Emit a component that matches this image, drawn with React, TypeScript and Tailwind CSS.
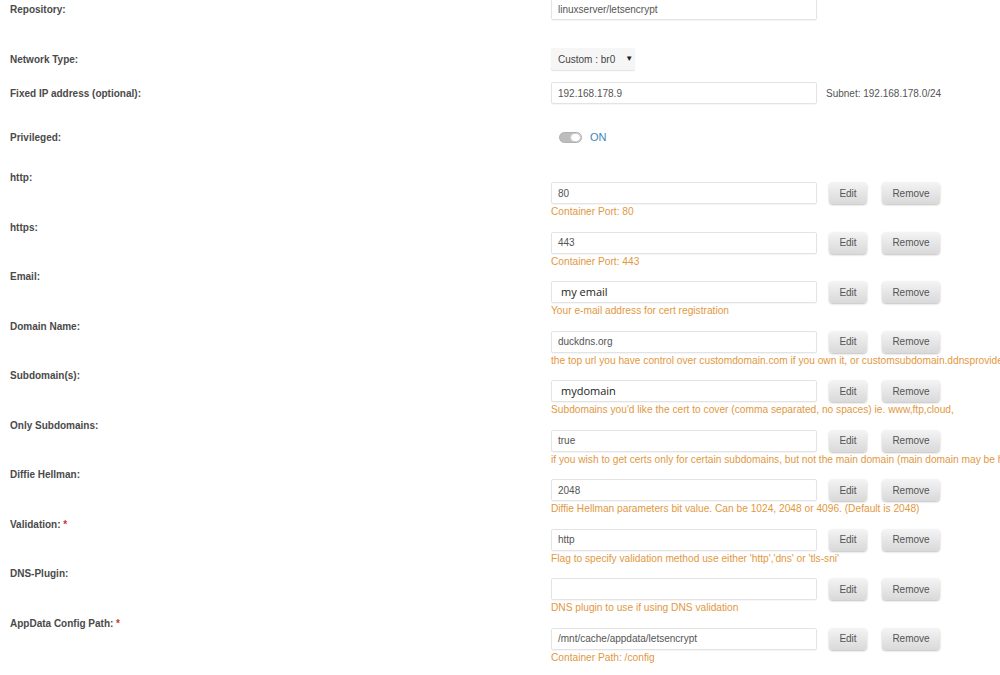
import React from 'react'

type Field = {
  label: string
  value: string
  help: string
  required?: boolean
  big?: boolean
}

const fields: Field[] = [
  { label: 'http', value: '80', help: 'Container Port: 80' },
  { label: 'https', value: '443', help: 'Container Port: 443' },
  { label: 'Email', value: 'my email', help: 'Your e-mail address for cert registration', big: true },
  {
    label: 'Domain Name',
    value: 'duckdns.org',
    help: "the top url you have control over customdomain.com if you own it, or customsubdomain.ddnsprovider.com if you don't own a domain",
  },
  {
    label: 'Subdomain(s)',
    value: 'mydomain',
    help: "Subdomains you'd like the cert to cover (comma separated, no spaces) ie. www,ftp,cloud,",
    big: true,
  },
  {
    label: 'Only Subdomains',
    value: 'true',
    help: 'if you wish to get certs only for certain subdomains, but not the main domain (main domain may be hosted on another machine)',
  },
  {
    label: 'Diffie Hellman',
    value: '2048',
    help: 'Diffie Hellman parameters bit value. Can be 1024, 2048 or 4096. (Default is 2048)',
  },
  {
    label: 'Validation',
    value: 'http',
    help: "Flag to specify validation method use either 'http','dns' or 'tls-sni'",
    required: true,
  },
  { label: 'DNS-Plugin', value: '', help: 'DNS plugin to use if using DNS validation' },
  {
    label: 'AppData Config Path',
    value: '/mnt/cache/appdata/letsencrypt',
    help: 'Container Path: /config',
    required: true,
  },
]

const Label = ({ text, required }: { text: string; required?: boolean }) => (
  <div className="w-[541px] shrink-0 pt-[1px] text-[10px] leading-[14px] font-bold text-[#4a4a4a]">
    {text}:{required && <span className="text-[#c33]"> *</span>}
  </div>
)

const TextBox = ({ value, big }: { value: string; big?: boolean }) => (
  <div className="w-[266px] h-[22px] shrink-0 flex items-center bg-white border border-[#e3e3e3] rounded-[2px] shadow-[0_1px_1px_rgba(0,0,0,0.04)]">
    {big ? (
      <span className="pl-[9px] text-[11px] text-[#222] [font-family:'Open_Sans',sans-serif]">{value}</span>
    ) : (
      <span className="pl-[6px] text-[10px] text-[#555]">{value}</span>
    )}
  </div>
)

const Btn = ({ text, w }: { text: string; w: string }) => (
  <div
    className={`${w} h-[22px] flex items-center justify-center rounded-[4px] bg-gradient-to-b from-[#f4f4f4] to-[#d9d9d9] shadow-[0_1px_2px_rgba(0,0,0,0.25)] text-[10px] text-[#555]`}
  >
    {text}
  </div>
)

export default function App() {
  return (
    <div className="w-[1000px] h-[675px] overflow-hidden bg-white pl-[10px] [font-family:'Liberation_Sans',Arial,sans-serif]">
      {/* Repository */}
      <div className="flex items-center h-[22px] -mt-[2px]">
        <Label text="Repository" />
        <TextBox value="linuxserver/letsencrypt" />
      </div>

      {/* Network Type */}
      <div className="flex items-center h-[22px] mt-[28px]">
        <Label text="Network Type" />
        <div className="w-[84px] h-[22px] flex items-center whitespace-nowrap bg-[#f6f6f6] shadow-[0_1px_1px_rgba(0,0,0,0.12)] rounded-[2px] pl-[7px] text-[10px] text-[#444]">
          Custom : br0
          <span className="ml-[10px] text-[8px] text-[#222]">▼</span>
        </div>
      </div>

      {/* Fixed IP */}
      <div className="flex items-center h-[22px] mt-[12px]">
        <Label text="Fixed IP address (optional)" />
        <TextBox value="192.168.178.9" />
        <span className="ml-[9px] text-[10px] text-[#555]">Subnet: 192.168.178.0/24</span>
      </div>

      {/* Privileged */}
      <div className="flex items-center h-[22px] mt-[22px]">
        <Label text="Privileged" />
        <div className="ml-[8px] w-[23px] h-[11px] rounded-full bg-[#bdbdbd] border border-[#b0b0b0] flex justify-end">
          <div className="w-[11px] h-[9px] rounded-full bg-white border border-[#c8c8c8]" />
        </div>
        <span className="ml-[8px] text-[11px] text-[#3d86bd]">ON</span>
      </div>

      {/* Port / variable rows */}
      <div className="mt-[22px] flex flex-col">
        {fields.map((f) => (
          <div key={f.label} className="flex h-[49.5px]">
            <Label text={f.label} required={f.required} />
            <div className="pt-[12px] flex flex-col min-w-0">
              <div className="flex items-center">
                <TextBox value={f.value} big={f.big} />
                <div className="ml-[12px]">
                  <Btn text="Edit" w="w-[38px]" />
                </div>
                <div className="ml-[15px]">
                  <Btn text="Remove" w="w-[58px]" />
                </div>
              </div>
              <div className="text-[10.2px] leading-[16px] text-[#e2983f] whitespace-nowrap">{f.help}</div>
            </div>
          </div>
        ))}
      </div>
    </div>
  )
}
